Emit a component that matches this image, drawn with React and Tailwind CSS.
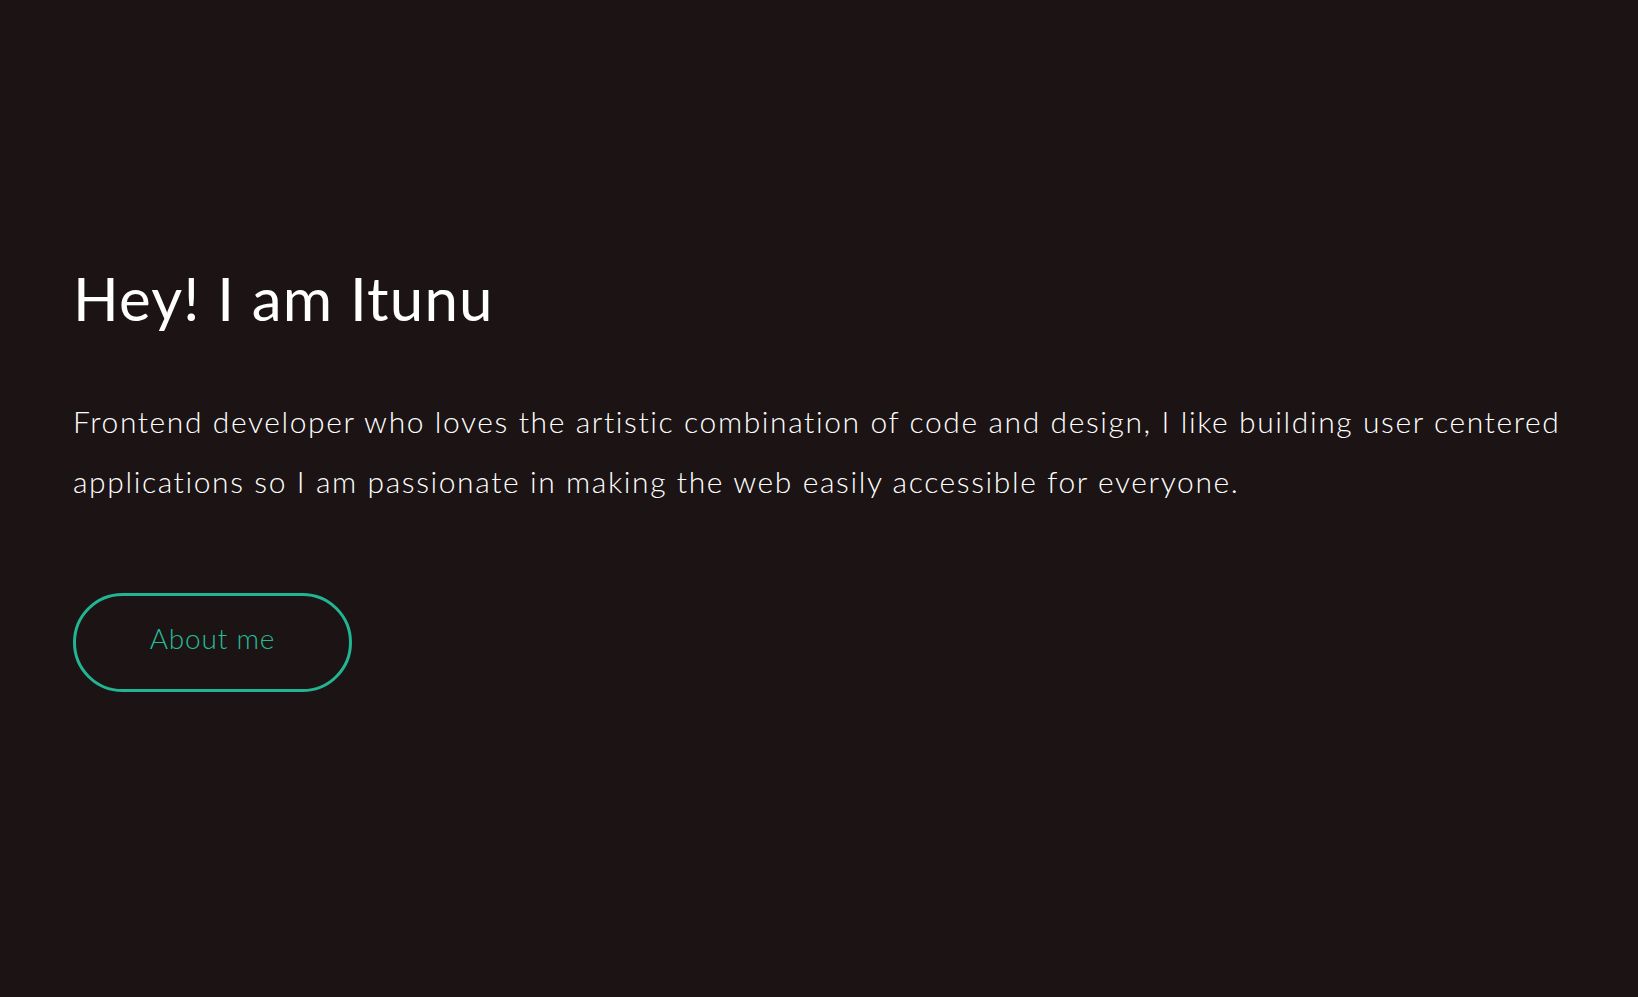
export default function App() {
  return (
    <div className="min-h-screen w-full bg-[#1c1414] font-['Lato','Open_Sans',sans-serif]">
      <section className="pl-[73px] pr-[60px] pt-[258px]">
        <h1 className="text-[60px] leading-[80px] font-normal tracking-[1.2px] text-white">Hey! I am Itunu</h1>
        <p className="mt-[53px] text-[30px] leading-[60px] font-light tracking-[1.6px] text-white max-w-[1500px]">
          Frontend developer who loves the artistic combination of code and design, I like building user centered applications so I am passionate in making the web easily accessible for everyone.
        </p>
        <button className="mt-[82px] flex h-[99px] w-[279px] items-center justify-center rounded-full border-[3px] border-[#21b592] pb-[10px] text-[28px] font-light tracking-[0.8px] text-[#24bb95]">
          About me
        </button>
      </section>
    </div>
  );
}
